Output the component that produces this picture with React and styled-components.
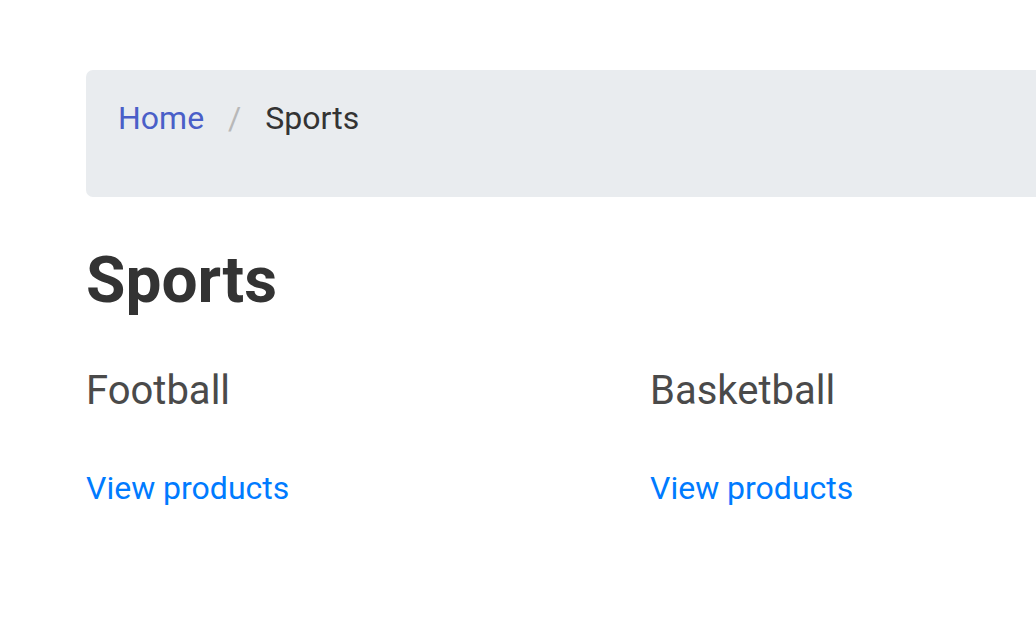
import React from 'react';
import styled, { createGlobalStyle } from 'styled-components';

const GlobalStyle = createGlobalStyle`
  html, body {
    margin: 0;
    padding: 0;
    background: #fff;
    overflow: hidden;
  }
  body {
    font-family: Roboto, "Liberation Sans", sans-serif;
    color: #333;
  }
`;

const Page = styled.div`
  padding: 70px 0 0 86px;
  width: 1130px;
`;

const Breadcrumb = styled.nav`
  background: #e9ecef;
  border-radius: 7px;
  padding: 24px 32px 55px;
`;

const Crumbs = styled.ol`
  list-style: none;
  margin: 0;
  padding: 0;
  display: flex;
  font-size: 32px;
  line-height: 48px;
`;

const Crumb = styled.li`
  color: ${p => (p.active ? '#333' : '#4a5fc8')};
  &:not(:first-child)::before {
    content: '/';
    color: #b8b8b8;
    padding: 0 24px 0 24px;
  }
`;

const Title = styled.h2`
  margin: 46px 0 0;
  font-size: 64px;
  line-height: 1.2;
  font-weight: 700;
  color: #333;
`;

const Row = styled.div`
  display: grid;
  grid-template-columns: 564px 564px;
  margin-top: 47px;
`;

const Col = styled.div`
  display: flex;
  flex-direction: column;
`;

const Name = styled.h5`
  margin: 0;
  font-size: 40px;
  line-height: 48px;
  font-weight: 400;
  color: #4a4a4a;
`;

const Link = styled.a`
  margin-top: 49px;
  font-size: 32px;
  line-height: 48px;
  color: #007bff;
  text-decoration: none;
`;

const sports = ['Football', 'Basketball'];

const App = () => {
  return (
    <Page>
      <GlobalStyle />
      <Breadcrumb>
        <Crumbs>
          <Crumb>Home</Crumb>
          <Crumb active>Sports</Crumb>
        </Crumbs>
      </Breadcrumb>
      <Title>Sports</Title>
      <Row>
        {sports.map(s => (
          <Col key={s}>
            <Name>{s}</Name>
            <Link href="#">View products</Link>
          </Col>
        ))}
      </Row>
    </Page>
  );
};

export default App;
